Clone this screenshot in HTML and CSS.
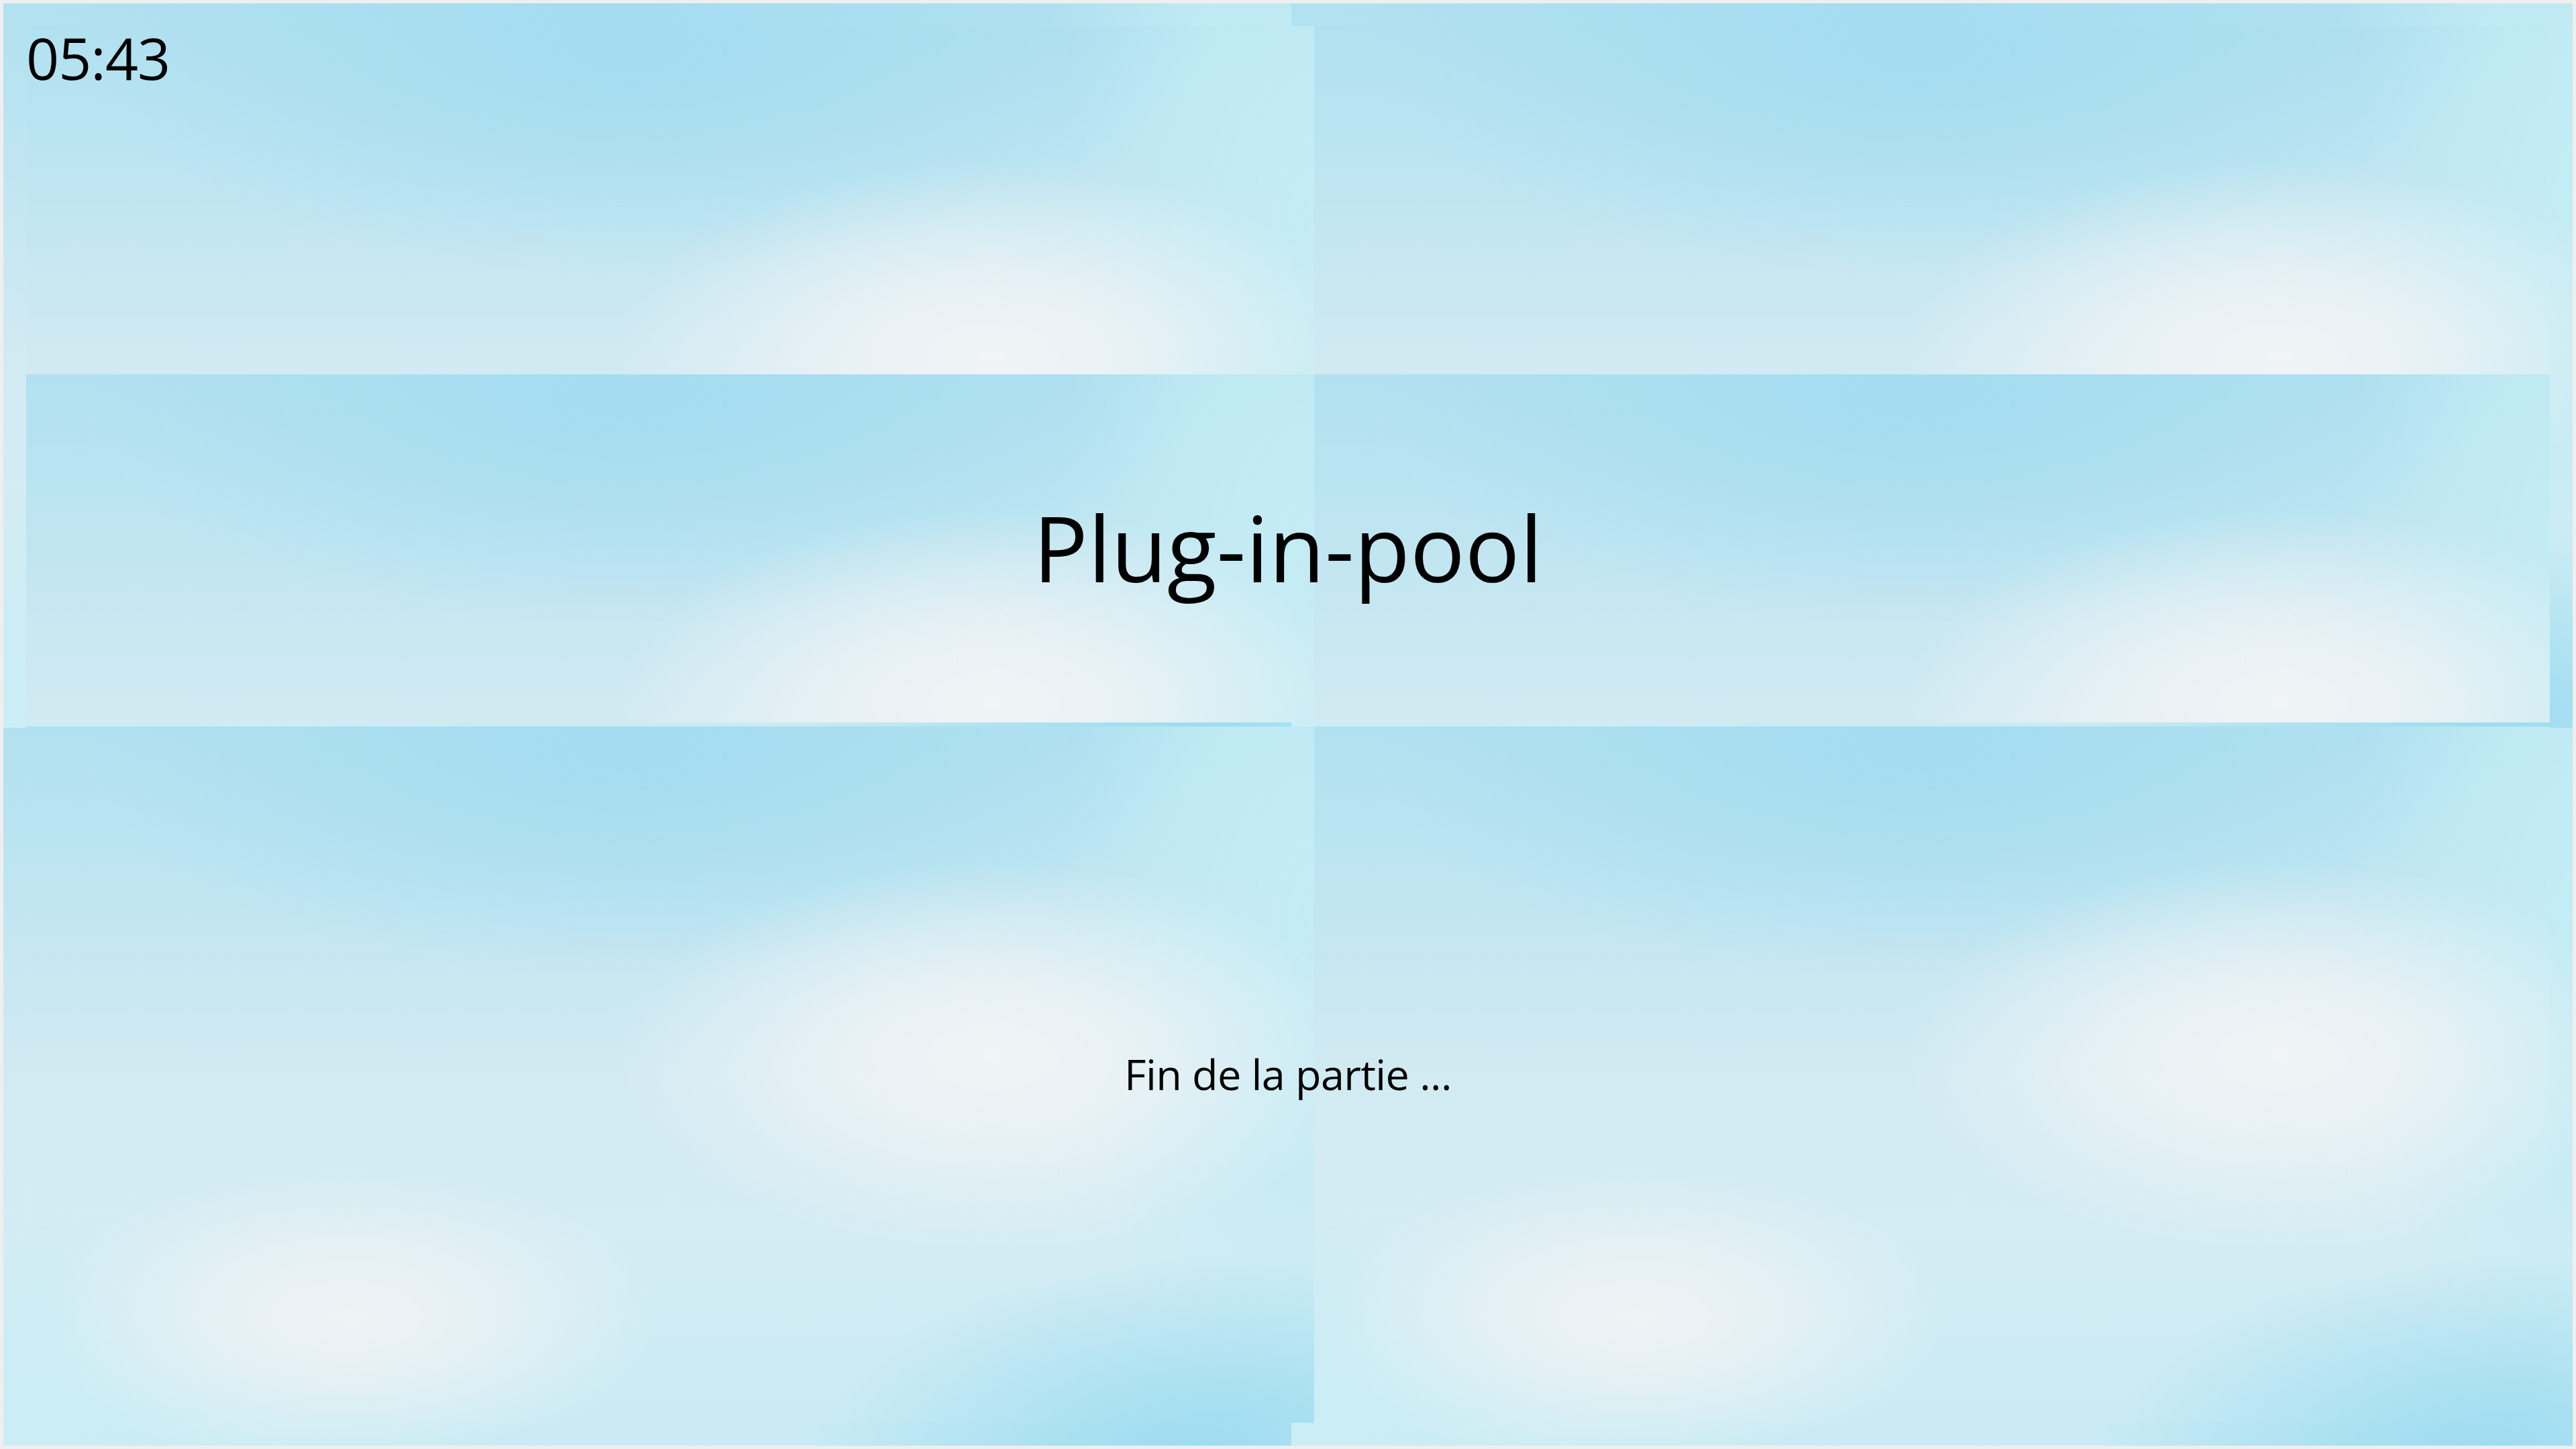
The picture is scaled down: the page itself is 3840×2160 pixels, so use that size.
FILE: index.html
```html
<!DOCTYPE html>
<html lang="fr">
<head>
<meta charset="utf-8">
<title>Plug-in-pool</title>
<link rel="stylesheet" href="styles.css">
</head>
<body>
  <div class="frame sky">
    <header class="header sky">
      <div class="clock">05:43</div>
    </header>
    <section class="banner sky">
      <h1 class="title">Plug-in-pool</h1>
    </section>
    <section class="stage sky">
      <p class="status">Fin de la partie ...</p>
    </section>
  </div>
</body>
</html>
```

FILE: styles.css
```css
html, body {
  background: #efefef;
}

body {
  margin: 5px;
  font-family: "Open Sans", "Noto Sans", "DejaVu Sans", sans-serif;
  color: #000;
}

.sky {
  background-color: #c3e7f2;
  background-image:
    radial-gradient(ellipse 560px 290px at 1440px 490px, rgba(240, 244, 246, 1) 0%, rgba(240, 244, 246, 0.75) 38%, rgba(240, 244, 246, 0) 100%),
    radial-gradient(ellipse 460px 220px at 480px 880px, rgba(239, 243, 245, 1) 0%, rgba(239, 243, 245, 0.7) 40%, rgba(239, 243, 245, 0) 100%),
    radial-gradient(ellipse 600px 300px at 1780px 1090px, rgba(156, 220, 240, 1) 0%, rgba(156, 220, 240, 0.6) 45%, rgba(156, 220, 240, 0) 100%),
    radial-gradient(ellipse 820px 340px at 900px 30px, rgba(164, 220, 240, 1) 0%, rgba(164, 220, 240, 0.6) 45%, rgba(164, 220, 240, 0) 100%),
    radial-gradient(ellipse 380px 800px at 1920px 280px, rgba(196, 236, 244, 1) 0%, rgba(196, 236, 244, 0.7) 50%, rgba(196, 236, 244, 0) 100%),
    radial-gradient(ellipse 500px 360px at 0px 1080px, rgba(203, 238, 245, 1) 0%, rgba(203, 238, 245, 0) 100%),
    linear-gradient(to bottom, #b1e1f0 0%, #bfe5f1 22%, #d2eaf2 48%, #d4ecf3 70%, #c9ebf4 100%);
  background-size: 1920px 1080px;
  background-repeat: repeat;
}

.frame {
  box-sizing: border-box;
  height: 2150px;
  padding: 34px;
  display: flex;
  flex-direction: column;
}

.header {
  height: 519px;
  box-sizing: border-box;
  padding: 4px 0 0 0;
}

.clock {
  font-size: 86px;
  line-height: 1;
  letter-spacing: -1px;
}

.banner {
  height: 519px;
  box-sizing: border-box;
  padding-top: 190px;
  text-align: center;
}

.title {
  margin: 0;
  font-weight: 400;
  font-size: 136px;
  line-height: 1;
}

.stage {
  margin-top: 6px;
  flex: 1;
  box-sizing: border-box;
  padding-top: 486px;
  text-align: center;
}

.status {
  margin: 0;
  font-size: 63px;
  line-height: 1;
  letter-spacing: -0.6px;
}
```
